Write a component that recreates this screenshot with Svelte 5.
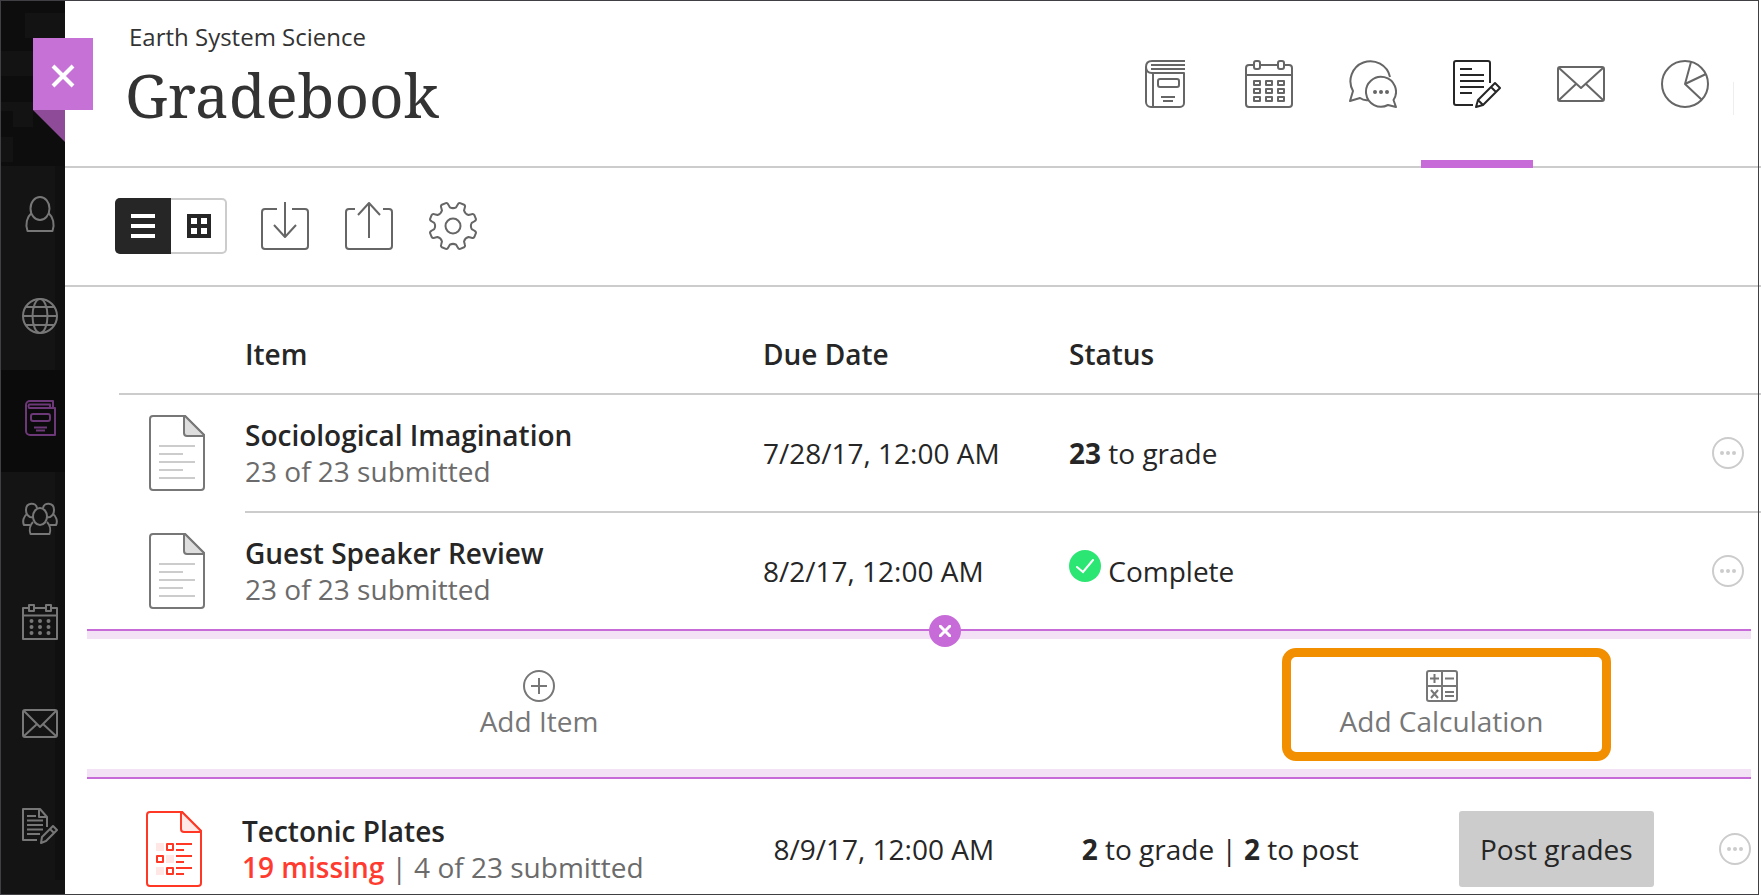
<script lang="ts">
  type Row = {
    title: string;
    missing?: string;
    submitted: string;
    due: string;
  };

  let view = $state("list");
  let adding = $state(true);
  let activeTab = $state("Gradebook");

  const sideLinks = ["Profile", "Institution", "Courses", "Organizations", "Calendar", "Messages", "Grades"];
  const tabs = ["Content", "Calendar", "Discussions", "Gradebook", "Messages", "Analytics"];

  const first: Row = {
    title: "Sociological Imagination",
    submitted: "23 of 23 submitted",
    due: "7/28/17, 12:00 AM",
  };
  const second: Row = {
    title: "Guest Speaker Review",
    submitted: "23 of 23 submitted",
    due: "8/2/17, 12:00 AM",
  };
  const third: Row = {
    title: "Tectonic Plates",
    missing: "19 missing",
    submitted: "4 of 23 submitted",
    due: "8/9/17, 12:00 AM",
  };

  const polar = (r: number, deg: number) => {
    const a = (deg * Math.PI) / 180;
    return `${(24 + r * Math.cos(a)).toFixed(2)} ${(24 + r * Math.sin(a)).toFixed(2)}`;
  };

  // eight rounded teeth, with a valley at twelve o'clock
  const gear =
    Array.from({ length: 8 }, (_, i) => {
      const c = i * 45 + 22.5;
      return (
        `${i ? "L" : "M"}${polar(19, c - 13)}L${polar(22, c - 10)}` +
        `Q${polar(24, c - 9)} ${polar(24, c - 5)}L${polar(24, c + 5)}` +
        `Q${polar(24, c + 9)} ${polar(22, c + 10)}L${polar(19, c + 13)}` +
        `Q${polar(17, c + 22.5)} ${polar(19, c + 32)}`
      );
    }).join("") + "Z";
</script>

{#snippet sideIcon(name: string)}
  <svg class="icon" width="36" height="36" viewBox="0 0 36 36" aria-hidden="true">
    {#if name === "Profile"}
      <ellipse cx="18" cy="12.5" rx="9.5" ry="11.5" />
      <path d="M9.500 17C5 21 3 28 5.500 35H30.500C33 28 31 21 26.500 17" />
    {:else if name === "Institution"}
      <circle cx="18" cy="18" r="17" />
      <ellipse cx="18" cy="18" rx="7.500" ry="17" />
      <path d="M1 18H35M4 9H32M4 27H32" />
    {:else if name === "Courses"}
      <path d="M31 8V1H8a4 4 0 0 0-4 4v26a4 4 0 0 0 4 4H33V8H7a3 3 0 0 1 0-3.500H28V8" />
      <rect x="9" y="14" width="19" height="7" rx="2" />
      <path d="M12 27.500H25M14 30.500H23" />
    {:else if name === "Organizations"}
      <ellipse cx="18" cy="14.500" rx="7" ry="8.500" />
      <path d="M11 20C8 23 7 28 8.500 32H27.500C29 28 28 23 25 20" />
      <path d="M15 6C14 0 4 0 4 8c0 3 2 6 4 7l3 .5M21 6C22 0 32 0 32 8c0 3-2 6-4 7l-3 .5" />
      <path d="M5 12C2 14 0 19 2 23H8M31 12C34 14 36 19 34 23H28" />
    {:else if name === "Calendar"}
      <path d="M7 4H1V35H35V4H29M12 4H24M1 11.500H35" />
      <path d="M7 1h5v6H7zM24 1h5v6H24z" />
      <path class="beads" d="M9.500 17h.01M18 17h.01M26.500 17h.01M9.500 23h.01M18 23h.01M26.500 23h.01M9.500 29h.01M18 29h.01M26.500 29h.01" />
    {:else if name === "Messages"}
      <rect x="1" y="4" width="34" height="27" rx="2" />
      <path d="M2 5L18 21 34 5M2 30L15 18M34 30L21 18" />
    {:else}
      <path d="M25 19V9L18 1H1V32H15M17 1V9H25" />
      <path d="M5 8H14M5 12.500H21M5 17H21M5 21.500H21M5 26H18" />
      <path d="M20 29L31 18 35 22 24 33 19 35ZM28 21l4 4" />
    {/if}
  </svg>
{/snippet}

{#snippet tabIcon(name: string)}
  <svg class="icon" width="48" height="48" viewBox="0 0 48 48" aria-hidden="true">
    {#if name === "Content"}
      <path d="M44 1H11C7 1 5 3 5 7V42a5 5 0 0 0 5 5H39a4 4 0 0 0 4-4V13H11C7 13 5 11 5 7M44 5H10M44 9H10M12 13V47" />
      <rect x="17" y="19" width="21" height="8" rx="2" />
      <path d="M20 37H34M22 41H32" />
    {:else if name === "Calendar"}
      <path d="M8 5H4a3 3 0 0 0-3 3V44a3 3 0 0 0 3 3H44a3 3 0 0 0 3-3V8a3 3 0 0 0-3-3H40M15 5H33M1 15H47" />
      <rect x="9" y="1" width="6" height="8" rx="2" />
      <rect x="33" y="1" width="6" height="8" rx="2" />
      {#each [21, 29, 37] as y}
        <path d="M9 {y}h6v4H9zM21 {y}h6v4h-6zM33 {y}h6v4h-6z" />
      {/each}
    {:else if name === "Discussions"}
      <path d="M41 17A20 20 0 1 0 4 31L1 41 11 38Q15 41 20 40" />
      <path d="M44.500 40A15 15 0 1 0 39 45L47 47Z" />
      <path class="beads" d="M26 32h.01M32 32h.01M38 32h.01" />
    {:else if name === "Gradebook"}
      <path d="M37 23V3a2 2 0 0 0-2-2H3a2 2 0 0 0-2 2V43a2 2 0 0 0 2 2H20" />
      <path d="M7 9H19M7 15H31M7 21H31M7 27H31M7 33H19" />
      <path d="M25 40L42 23 47 28 30 45 23 47ZM38 27l5 5M25 40l5 5" />
    {:else if name === "Messages"}
      <rect x="1" y="7" width="46" height="34" rx="2" />
      <path d="M2 8L24 28 46 8M2 40L19 24M46 40L29 24" />
    {:else}
      <circle cx="24" cy="24" r="23" />
      <path d="M30 2L24 24 45 14M24 24L41 40" />
    {/if}
  </svg>
{/snippet}

{#snippet fileIcon(overdue: boolean)}
  <svg class={["file", { overdue }]} width="56" height="76" viewBox="0 0 56 76" aria-hidden="true">
    <path d="M36 1H4a3 3 0 0 0-3 3V72a3 3 0 0 0 3 3H52a3 3 0 0 0 3-3V20Z" />
    <path class="fold" d="M35 1V18a3 3 0 0 0 3 3H55V20L36 1Z" />
    {#if overdue}
      <path class="shade" d="M10 32h8v8h-8zM20 44h8v8h-8zM10 56h8v8h-8z" />
      <path d="M21 33h6v6h-6zM11 45h6v6h-6zM21 57h6v6h-6z" />
      <path d="M30 33H46M30 39H38M30 45H46M30 51H38M30 57H46M30 63H38" />
    {:else}
      <path class="text-lines" d="M10 31H46M10 39H34M10 47H46M10 55H34M10 63H46" />
    {/if}
  </svg>
{/snippet}

{#snippet itemCells(row: Row)}
  <td class="kind">{@render fileIcon(!!row.missing)}</td>
  <td>
    <div>
      <strong>{row.title}</strong>
      <div class="submitted">
        {#if row.missing}<span class="missing">{row.missing}</span> |{/if}
        {row.submitted}
      </div>
    </div>
  </td>
  <td>{row.due}</td>
{/snippet}

{#snippet menu(title: string)}
  <td>
    <button class="menu" aria-label="More options for {title}">
      <svg width="32" height="32" viewBox="0 0 32 32" aria-hidden="true">
        <circle cx="16" cy="16" r="15" />
        <path d="M10 16h.01M16 16h.01M22 16h.01" />
      </svg>
    </button>
  </td>
{/snippet}

<div class="app">
  <nav class="side" aria-label="Main">
    <svg class="mosaic" width="65" height="166" viewBox="0 0 65 166" aria-hidden="true">
      <path d="M25 13h40v25H25zM0 51h33v25H0zM0 102h33v9H0zM13 111h20v16H13zM0 137h13v25H0z" />
    </svg>
    {#each sideLinks as link}
      <a href="#{link.toLowerCase()}" class={{ current: link === "Courses" }} aria-label={link}>
        {@render sideIcon(link)}
      </a>
    {/each}
  </nav>

  <button class="close" aria-label="Close course">
    <svg width="24" height="24" viewBox="0 0 24 24" aria-hidden="true">
      <path d="M2 2L22 22M22 2L2 22" />
    </svg>
  </button>

  <main>
    <header>
      <div class="titles">
        <p>Earth System Science</p>
        <h1>Gradebook</h1>
      </div>
      <nav class="tabs" aria-label="Course">
        {#each tabs as tab}
          <button
            class={{ active: tab === activeTab }}
            aria-label={tab}
            onclick={() => (activeTab = tab)}
          >
            {@render tabIcon(tab)}
          </button>
        {/each}
      </nav>
    </header>

    <div class="toolbar">
      <div class="views">
        <button class={{ on: view === "list" }} aria-label="List view" onclick={() => (view = "list")}>
          <svg width="24" height="24" viewBox="0 0 24 24" aria-hidden="true">
            <path d="M0 0h24v4H0zM0 10h24v4H0zM0 20h24v4H0z" />
          </svg>
        </button>
        <button class={{ on: view === "grid" }} aria-label="Grid view" onclick={() => (view = "grid")}>
          <svg width="24" height="24" viewBox="0 0 24 24" aria-hidden="true">
            <path
              fill-rule="evenodd"
              d="M0 0h24v24H0zM4 4v6h6V4zM14 4v6h6V4zM4 14v6h6v-6zM14 14v6h6v-6z"
            />
          </svg>
        </button>
      </div>
      <div class="tools">
        <button aria-label="Download">
          <svg class="icon" width="48" height="48" viewBox="0 0 48 48" aria-hidden="true">
            <path d="M16 7H4a3 3 0 0 0-3 3V44a3 3 0 0 0 3 3H44a3 3 0 0 0 3-3V10a3 3 0 0 0-3-3H31" />
            <path d="M24 0V35M13 23L24 35 35 23" />
          </svg>
        </button>
        <button aria-label="Upload">
          <svg class="icon" width="48" height="48" viewBox="0 0 48 48" aria-hidden="true">
            <path d="M10 7H4a3 3 0 0 0-3 3V44a3 3 0 0 0 3 3H44a3 3 0 0 0 3-3V10a3 3 0 0 0-3-3H38" />
            <path d="M24 36V1M13 13L24 1 35 13" />
          </svg>
        </button>
        <button aria-label="Settings">
          <svg class="icon" width="48" height="48" viewBox="0 0 48 48" aria-hidden="true">
            <path d={gear} />
            <circle cx="24" cy="24" r="7.5" />
          </svg>
        </button>
      </div>
    </div>

    <table>
      <thead>
        <tr>
          <td></td>
          <th scope="col">Item</th>
          <th scope="col">Due Date</th>
          <th scope="col">Status</th>
        </tr>
      </thead>
      <tbody>
        <tr class="ruled">
          {@render itemCells(first)}
          <td><span><b>23</b> to grade</span></td>
          <td></td>
          {@render menu(first.title)}
        </tr>
        <tr>
          {@render itemCells(second)}
          <td>
            <span>
              <svg class="done" width="32" height="32" viewBox="0 0 32 32" aria-hidden="true">
                <circle cx="16" cy="16" r="16" />
                <path d="M8 17L14 22 24 10" />
              </svg>
              Complete
            </span>
          </td>
          <td></td>
          {@render menu(second.title)}
        </tr>
        {#if adding}
          <tr class="insert">
            <td colspan="6">
              <button class="add item">
                <svg class="icon" width="32" height="32" viewBox="0 0 32 32" aria-hidden="true">
                  <circle cx="16" cy="16" r="15" />
                  <path d="M16 8V24M8 16H24" />
                </svg>
                Add Item
              </button>
              <button class="add calculation">
                <svg class="icon" width="32" height="32" viewBox="0 0 32 32" aria-hidden="true">
                  <rect x="1" y="1" width="30" height="30" rx="2" />
                  <path d="M16 1V31M1 16H31M4 8.500H13M8.500 4V13M19 8.500H28M5 20L12 28M12 20L5 28M19 22H28M19 26H28" />
                </svg>
                Add Calculation
              </button>
              <button class="cancel" aria-label="Cancel" onclick={() => (adding = false)}>
                <svg width="12" height="12" viewBox="0 0 12 12" aria-hidden="true">
                  <path d="M1 1L11 11M11 1L1 11" />
                </svg>
              </button>
            </td>
          </tr>
        {/if}
        <tr class="open">
          {@render itemCells(third)}
          <td><span><b>2</b> to grade | <b>2</b> to post</span></td>
          <td><button class="post">Post grades</button></td>
          {@render menu(third.title)}
        </tr>
      </tbody>
    </table>
  </main>

  <div class="frame"></div>
</div>

<style>
  :global(body) {
    margin: 0;
    background: #fff;
  }

  .app {
    --accent: #c66bd8;
    --accent-soft: #f3e1f6;
    --rule: #ccc;
    --ink: #262626;
    --muted: #6b6b6b;

    position: relative;
    display: flex;
    min-height: 100vh;
    overflow: hidden;
    color: var(--ink);
    font: 28px/36px "Open Sans", sans-serif;
  }

  button {
    padding: 0;
    border: 0;
    background: none;
    color: inherit;
    font: inherit;
    cursor: pointer;
  }

  svg {
    display: block;
  }

  .icon {
    fill: none;
    stroke: currentColor;
    stroke-width: 2;
    stroke-linejoin: round;
  }

  .beads {
    stroke-width: 4;
    stroke-linecap: round;
  }

  /* sidebar */
  .side {
    flex: none;
    width: 65px;
    background: #141414;
  }

  .mosaic {
    background: #0d0d0d;
    fill: #131313;
  }

  .side a {
    display: block;
    box-sizing: border-box;
    height: 102px;
    padding: 30px 0 0 22px;
    box-shadow: inset -10px 0 0 #101010;
    color: #777;
  }

  .side a.current {
    background: #0b0b0b;
    box-shadow: none;
    color: #6d3877;
  }

  .close {
    position: absolute;
    top: 38px;
    left: 33px;
    z-index: 1;
    display: grid;
    place-items: center;
    width: 60px;
    height: 72px;
    padding-top: 4px;
    background: #c671d6;
  }

  .close::after {
    content: "";
    position: absolute;
    top: 100%;
    left: 0;
    width: 32px;
    height: 32px;
    background: #8d4b98;
    clip-path: polygon(0 0, 100% 0, 100% 100%);
  }

  .close path {
    stroke: #fff;
    stroke-width: 4;
  }

  /* header */
  main {
    flex: 1;
    min-width: 0;
  }

  header {
    display: flex;
    justify-content: space-between;
    height: 166px;
    padding: 0 24px 0 60px;
    border-bottom: 2px solid var(--rule);
  }

  .titles {
    padding-top: 21px;
    color: #333;
  }

  .titles p {
    margin: 0;
    padding-left: 4px;
    font-size: 24px;
    line-height: 32px;
  }

  h1 {
    margin: 0;
    font: 60px/84px "Noto Serif", "DejaVu Serif Condensed", "DejaVu Serif", serif;
  }

  .tabs {
    position: relative;
    display: flex;
  }

  .tabs::after {
    content: "";
    position: absolute;
    top: 82px;
    right: 3px;
    width: 1px;
    height: 33px;
    background: #eee;
  }

  .tabs button {
    position: relative;
    display: grid;
    place-items: center;
    width: 104px;
    padding-top: 2px;
    color: #666;
  }

  .tabs button.active {
    color: var(--ink);
  }

  .tabs button.active::after {
    content: "";
    position: absolute;
    right: -4px;
    bottom: -2px;
    left: -4px;
    height: 8px;
    background: var(--accent);
  }

  /* toolbar */
  .toolbar {
    display: flex;
    align-items: center;
    gap: 34px;
    padding: 30px 50px 31px;
    border-bottom: 2px solid var(--rule);
  }

  .views {
    display: flex;
    border-radius: 5px;
    box-shadow: inset 0 0 0 2px var(--rule);
  }

  .views button {
    display: grid;
    place-items: center;
    width: 56px;
    height: 56px;
    fill: var(--ink);
  }

  .views button.on {
    background: var(--ink);
    fill: #fff;
  }

  .views button:first-child {
    border-radius: 5px 0 0 5px;
  }

  .views button:last-child {
    border-radius: 0 5px 5px 0;
  }

  .tools {
    display: flex;
    gap: 36px;
    color: #666;
  }

  /* gradebook list */
  table,
  thead,
  tbody {
    display: block;
  }

  tr {
    display: grid;
    grid-template-columns: 126px 518fr 306fr 390fr 253px 49px;
    margin-left: 54px;
  }

  th,
  td {
    display: flex;
    align-items: center;
    padding: 0;
    text-align: left;
    white-space: nowrap;
  }

  th,
  strong,
  .missing {
    font-weight: 600;
  }

  thead tr {
    padding: 49px 0 21px;
    border-bottom: 2px solid var(--rule);
  }

  tbody tr {
    grid-template-rows: 116px;
  }

  .ruled {
    grid-template-rows: 118px;
  }

  .ruled td {
    border-bottom: 2px solid var(--rule);
  }

  .kind {
    padding: 0 0 0 30px;
  }

  .ruled .kind {
    border-color: transparent;
  }

  .submitted {
    color: var(--muted);
  }

  .missing {
    color: #ff3b30;
  }

  .file {
    fill: none;
    stroke: #777;
    stroke-width: 2;
    stroke-linejoin: round;
  }

  .file .fold {
    fill: #dedede;
  }

  .file .text-lines {
    stroke: var(--rule);
  }

  .file.overdue {
    stroke: #ff3826;
  }

  .file.overdue .fold,
  .file .shade {
    fill: #ffe7e5;
  }

  .file .shade {
    stroke: none;
  }

  .done {
    display: inline;
    margin-top: -6px;
    fill: #2be673;
  }

  .done path {
    fill: none;
    stroke: #fff;
    stroke-width: 2;
    stroke-linecap: round;
  }

  .menu svg {
    fill: none;
    stroke: var(--rule);
    stroke-width: 2;
  }

  .menu path {
    stroke-width: 4;
    stroke-linecap: round;
  }

  .insert {
    display: block;
    margin: 0 10px 0 22px;
  }

  .insert td {
    position: relative;
    display: grid;
    grid-template-columns: 904fr 291fr 329fr 140fr;
    align-items: stretch;
    box-sizing: border-box;
    height: 150px;
    padding: 17px 0 16px;
    border: solid var(--accent);
    border-width: 2px 0;
    box-shadow:
      inset 0 8px var(--accent-soft),
      inset 0 -8px var(--accent-soft);
  }

  .add {
    display: flex;
    flex-direction: column;
    align-items: center;
    justify-content: center;
    gap: 1px;
    color: #777;
  }

  .add.calculation {
    grid-column: 3;
    padding-right: 10px;
    border: 9px solid #f28f00;
    border-radius: 14px;
  }

  .cancel {
    position: absolute;
    top: -16px;
    left: 50.6%;
    display: grid;
    place-items: center;
    width: 32px;
    height: 32px;
    border-radius: 50%;
    background: var(--accent);
  }

  .cancel path {
    stroke: #fff;
    stroke-width: 3;
    stroke-linecap: round;
  }

  .open {
    grid-template-columns: 126px 531fr 308fr 377fr 260px 42px;
    grid-template-rows: 76px;
    margin-left: 51px;
    padding: 32px 0 8px;
  }

  .post {
    height: 76px;
    padding: 0 21px;
    border-radius: 3px;
    background: #ccc;
  }

  .frame {
    position: absolute;
    inset: 0 2px 0 0;
    z-index: 2;
    border: 1px solid #3f3f44;
    pointer-events: none;
  }
</style>
